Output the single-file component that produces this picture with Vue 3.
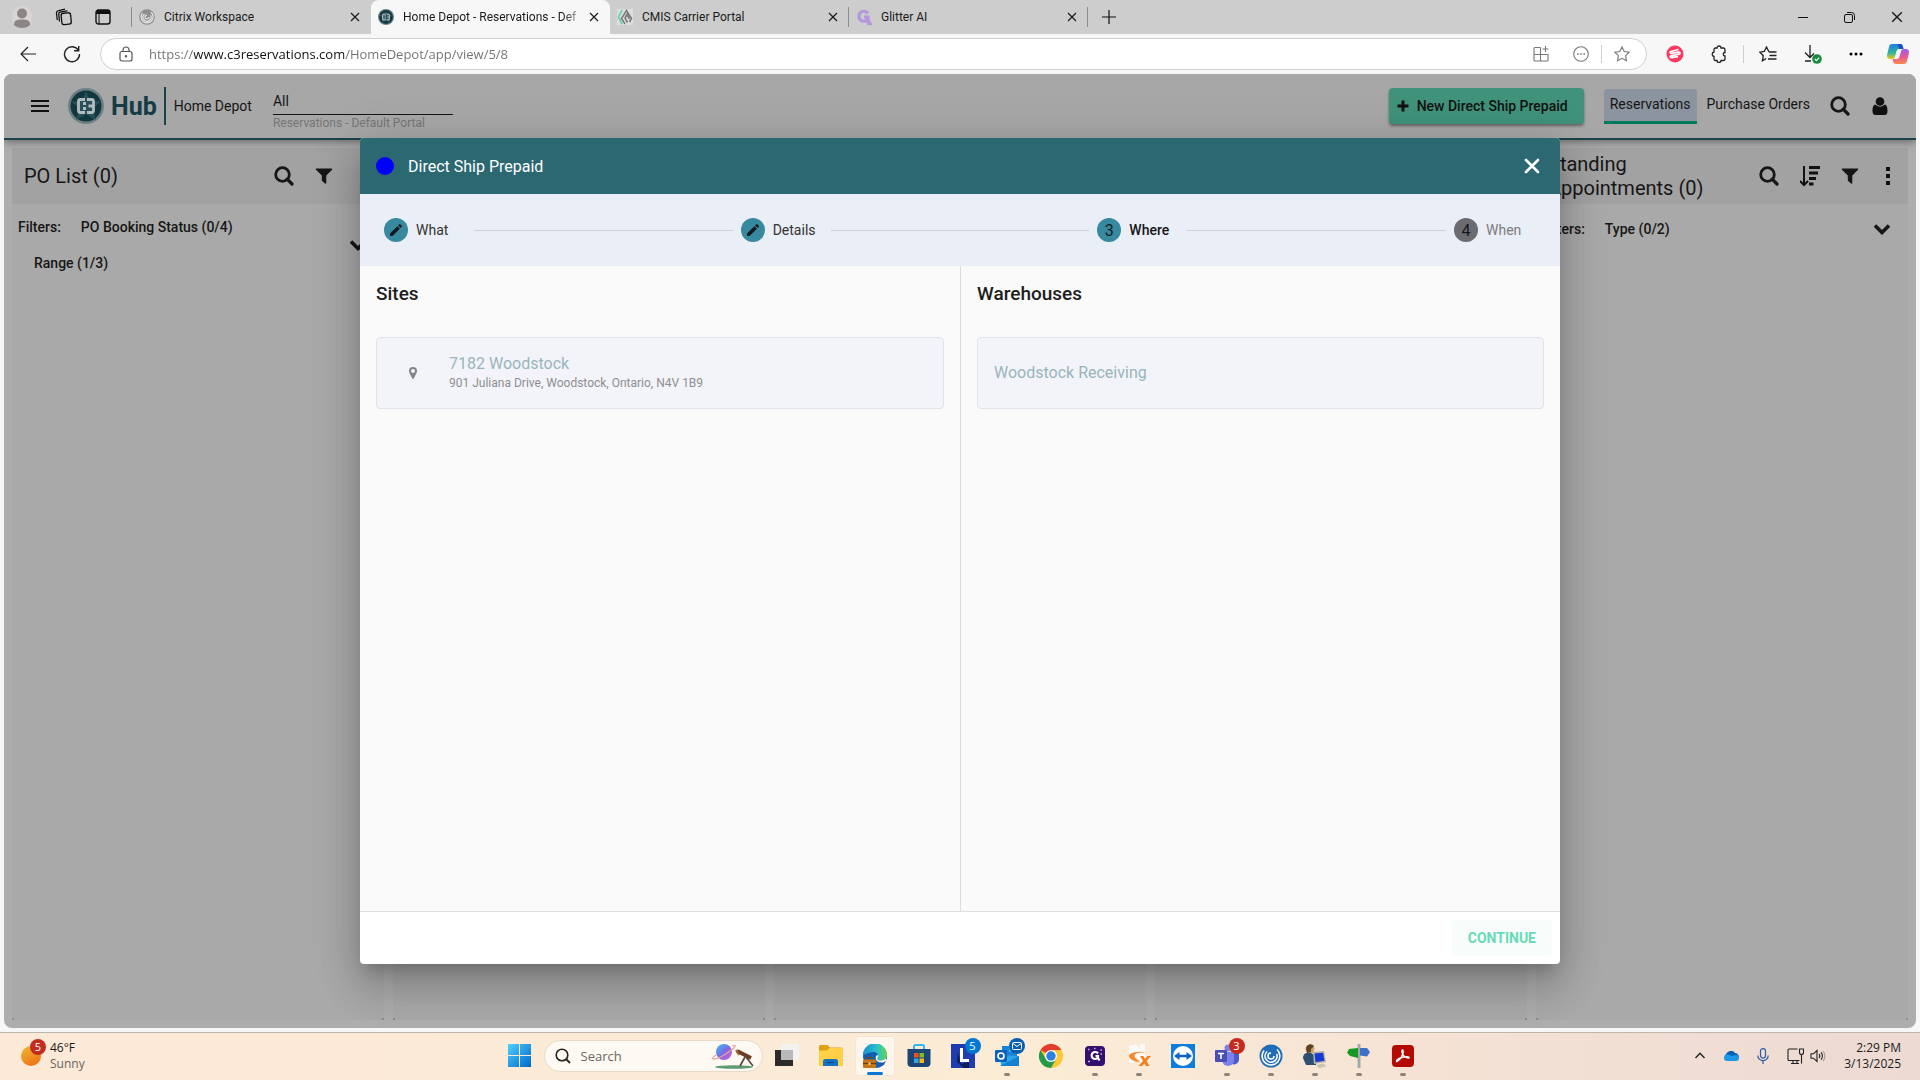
<template>
  <div class="desktop">
    <svg class="sprite" aria-hidden="true">
      <symbol id="i-x" viewBox="0 0 10 10"><path d="M1 1l8 8M9 1l-8 8" fill="none" stroke="currentColor" stroke-width="1.2" /></symbol>
      <symbol id="i-search" viewBox="0 0 20 20"><circle cx="8.500" cy="8.500" r="6.800" fill="none" stroke="currentColor" stroke-width="2.800" /><path d="M13.200 13.200l4.800 4.800" stroke="currentColor" stroke-width="3.200" stroke-linecap="round" /></symbol>
      <symbol id="i-filter" viewBox="0 0 18 18"><path d="M1.500 1.500h15c.7 0 1 .7.5 1.200L11.300 8.500V16c0 .8-.8 1-1.300.6L7.200 14a1 1 0 0 1-.4-.9V8.500L1 2.700c-.5-.5-.2-1.200.5-1.200z" fill="currentColor" /></symbol>
      <symbol id="i-chevron" viewBox="0 0 18 12"><path d="M2 2.500l7 7 7-7" fill="none" stroke="currentColor" stroke-width="3.600" /></symbol>
      <symbol id="i-pencil" viewBox="0 0 24 24"><path d="M3 17.250V21h3.750L17.810 9.940l-3.750-3.750L3 17.250zM20.710 7.040a1 1 0 0 0 0-1.410l-2.340-2.340a1 1 0 0 0-1.410 0l-1.830 1.830 3.750 3.750 1.830-1.830z" fill="currentColor" /></symbol>
      <symbol id="i-c3" viewBox="0 0 36 36">
        <circle cx="18" cy="18" r="18" fill="#6f8085" />
        <circle cx="18" cy="18" r="15.500" fill="#12383f" />
        <path d="M18 3l4 10 11 .5-8.500 7L28 32l-10-6-10 6 3.500-11.500-8.500-7L14 13z" fill="#275058" />
        <path d="M17 11.500h-4.500a2 2 0 0 0-2 2v9a2 2 0 0 0 2 2H17M19 11.500h4.500a2 2 0 0 1 2 2v9a2 2 0 0 1-2 2H19M15 15.500h3M15 20.500h3M20.500 18h5" fill="none" stroke="#b4bcbe" stroke-width="2.800" />
      </symbol>
    </svg>

    <header class="browser">
      <div class="tab-strip">
        <div class="strip-tools">
          <button class="plain" aria-label="Profile">
            <svg width="22" height="24" viewBox="0 0 22 24"><rect x="1" y="1" width="20" height="22" rx="10" fill="#d8d6d4" /><circle cx="11" cy="8.500" r="5" fill="#8b8685" /><path d="M3 20c0-5 3-5.500 8-5.500s8 .5 8 5.500c-4 4-12 4-16 0z" fill="#8b8685" /></svg>
          </button>
          <button class="plain" aria-label="Workspaces">
            <svg width="18" height="18" viewBox="0 0 18 18" fill="none" stroke="#111" stroke-width="1.300"><rect x="6.500" y="5" width="9.500" height="11.500" rx="2.500" transform="rotate(-6 11 11)" /><path d="M4.500 13.500L3.800 6.500a2.500 2.500 0 0 1 2.200-2.700l6.500-.9M2.300 12L1.500 5.500A2.500 2.500 0 0 1 3.600 2.600L10 1.200" /></svg>
          </button>
          <button class="plain" aria-label="Tab actions">
            <svg width="16" height="16" viewBox="0 0 16 16"><rect x="1" y="1" width="14" height="14" rx="2.500" fill="none" stroke="#111" stroke-width="1.400" /><path d="M1 3.500A2.500 2.500 0 0 1 3.500 1h9A2.500 2.500 0 0 1 15 3.500V5H1z" fill="#111" /><path d="M4 5v10" stroke="#111" stroke-width="1" /></svg>
          </button>
        </div>
        <div v-for="tab in tabs" :key="tab.title" class="tab" :class="{ active: tab.active, divided: tab.divided }">
          <svg v-if="tab.icon === 'citrix'" width="16" height="16" viewBox="0 0 16 16" fill="none"><circle cx="8" cy="8" r="7.800" fill="#8d8d8d" /><path d="M3.500 4a6 6 0 1 0 8.500-.7M5.500 5.200a4 4 0 1 0 6 1M8 6.200a1.900 1.900 0 1 0 1.900 1.900" stroke="#e8e8e8" stroke-width="1.200" /></svg>
          <svg v-else-if="tab.icon === 'c3'" width="16" height="16"><use href="#i-c3" /></svg>
          <svg v-else-if="tab.icon === 'cmis'" width="16" height="16" viewBox="0 0 16 16" fill="none"><rect width="16" height="16" fill="#dedede" /><path d="M5 1L1.500 8 5 15" stroke="#6fd0ae" stroke-width="1.800" /><path d="M8 15L4.500 9.500 9.500 1.500 14.500 9.500 12.500 13M10.500 13.500L8 9l2-3.500 2.500 4.500" stroke="#7c7c7c" stroke-width="1.600" /></svg>
          <svg v-else width="16" height="16" viewBox="0 0 16 16" fill="none"><path d="M12 4.500A5 5 0 1 0 12 10V8H8M12 11l2 3.500h-3" stroke="#b497dc" stroke-width="3.200" /></svg>
          <span class="tab-title">{{ tab.title }}</span>
          <button class="plain" aria-label="Close tab"><svg width="10" height="10"><use href="#i-x" /></svg></button>
        </div>
        <button class="plain new-tab" aria-label="New tab"><svg width="14" height="14" viewBox="0 0 14 14"><path d="M7 0v14M0 7h14" stroke="#111" stroke-width="1.200" /></svg></button>
        <div class="window-controls">
          <button class="plain" aria-label="Minimize"><svg width="10" height="10"><path d="M0 5.500h10" stroke="#111" /></svg></button>
          <button class="plain" aria-label="Restore"><svg width="11" height="11" viewBox="0 0 11 11" fill="none" stroke="#111"><rect x=".5" y="2.500" width="8" height="8" rx="1.500" /><path d="M3 .5h4.500a3 3 0 0 1 3 3V8" /></svg></button>
          <button class="plain" aria-label="Close window"><svg width="12" height="12"><use href="#i-x" /></svg></button>
        </div>
      </div>
      <div class="toolbar">
        <button class="plain nav" aria-label="Back"><svg width="16" height="16" viewBox="0 0 16 16" fill="none" stroke="#222" stroke-width="1.200"><path d="M16 8H1M8 1L1 8l7 7" /></svg></button>
        <button class="plain nav" aria-label="Refresh"><svg width="18" height="18" viewBox="0 0 18 18" fill="none" stroke="#222" stroke-width="1.400"><path d="M15.500 5.500A7.500 7.500 0 1 0 16.500 9M15.700 1v4.700H11" /></svg></button>
        <div class="address">
          <svg width="14" height="16" viewBox="0 0 14 16" fill="none" stroke="#555" stroke-width="1.200"><rect x="1" y="5.500" width="12" height="9.500" rx="2" /><path d="M4 5.500V4a3 3 0 0 1 6 0v1.500" /><circle cx="7" cy="10.300" r=".6" fill="#555" /></svg>
          <input class="url" aria-label="Address" value="https://www.c3reservations.com/HomeDepot/app/view/5/8">
          <div class="address-tools">
            <button class="plain" aria-label="Apps"><svg width="16" height="16" viewBox="0 0 16 16" fill="none" stroke="#777" stroke-width="1.100"><path d="M7.500 1.500H2a1 1 0 0 0-1 1V14a1 1 0 0 0 1 1h12a1 1 0 0 0 1-1V8.500H1M7.500 1.500V15M12.500 0v6M9.500 3h6" /></svg></button>
            <button class="plain" aria-label="More"><svg width="16" height="16" viewBox="0 0 16 16"><circle cx="8" cy="8" r="7.300" fill="none" stroke="#777" stroke-width="1.100" /><path d="M4 7.300h1.600v1.500H4zM7.200 7.300h1.600v1.500H7.200zM10.400 7.300H12v1.500h-1.600z" fill="#777" /></svg></button>
            <i class="sep"></i>
            <button class="plain" aria-label="Favorite"><svg width="16" height="16" viewBox="0 0 16 16" fill="none" stroke="#777" stroke-width="1.100"><path d="M8 .9l2.200 4.600 5 .7-3.600 3.500.9 5L8 12.300l-4.500 2.400.9-5L.8 6.200l5-.7z" /></svg></button>
          </div>
        </div>
        <div class="extensions">
          <button class="plain" aria-label="Recorder"><svg width="18" height="18" viewBox="0 0 18 18"><circle cx="9" cy="9" r="8.500" fill="#fb3a62" /><path d="M12.500 4.500l-7.500 2c-1.500.5-1 2 .3 1.900l7.500-1.200c1.700-.1 1.700 1.600.3 2l-8 1.600c-1.500.5-1 2 .4 1.900l6.500-1" stroke="#fff" stroke-width="1.700" fill="none" /></svg></button>
          <button class="plain" aria-label="Extensions"><svg width="16" height="18" viewBox="0 0 16 18" fill="none" stroke="#222" stroke-width="1.300"><path d="M6 3a2 2 0 0 1 4 0h2.500A1.500 1.500 0 0 1 14 4.500V7.500a1.600 1.600 0 0 0 0 3.500v3a1.500 1.500 0 0 1-1.500 1.500H10a2 2 0 0 1-4 0H4.500A1.500 1.500 0 0 1 3 14v-2.500a2.300 2.300 0 0 1 0-4.500V4.500A1.500 1.500 0 0 1 4.500 3z" /></svg></button>
          <i class="sep"></i>
          <button class="plain" aria-label="Favorites"><svg width="18" height="16" viewBox="0 0 18 16" fill="none" stroke="#222" stroke-width="1.300"><path d="M10 6L7.500 1 5.300 5.500.8 6.200l3.500 3.500-.9 5L7 12.600M10 6h7.500M10.500 9.500h7M9 13h8.500" /></svg></button>
          <button class="plain" aria-label="Downloads"><svg width="20" height="20" viewBox="0 0 20 20"><path d="M8 1v12M3 8.500l5 5 4-4M3 17h6" fill="none" stroke="#222" stroke-width="1.300" /><circle cx="15" cy="15" r="4.800" fill="#178a3c" /><path d="M12.800 15l1.600 1.600 2.800-3" fill="none" stroke="#fff" stroke-width="1.200" /></svg></button>
          <button class="plain" aria-label="Settings"><svg width="14" height="4"><circle cx="2" cy="2" r="1.500" /><circle cx="7" cy="2" r="1.500" /><circle cx="12" cy="2" r="1.500" /></svg></button>
          <button class="plain copilot" aria-label="Copilot">
            <svg width="22" height="20" viewBox="0 0 22 20">
              <defs>
                <linearGradient id="cpA" x1="0" y1="0" x2="0" y2="1"><stop offset="0" stop-color="#1a7fe0" /><stop offset=".6" stop-color="#33b59a" /><stop offset="1" stop-color="#f3c614" /></linearGradient>
                <linearGradient id="cpB" x1="0" y1="0" x2="0" y2="1"><stop offset="0" stop-color="#9a5cf0" /><stop offset=".5" stop-color="#e8559a" /><stop offset="1" stop-color="#fb8a4a" /></linearGradient>
              </defs>
              <path d="M5 0h8c2 0 2.500 1 3 3l.5 2H12c-2 0-2.500 2-3 4l-1 3.500C7.500 14 7 15 5 15H3c-3 0-3.500-2.500-2.500-6L2 3c.5-2 1.500-3 3-3z" fill="url(#cpA)" />
              <path d="M17 20H9c-2 0-2.500-1-3-3l-.5-2H10c2 0 2.500-2 3-4l1-3.500C14.500 6 15 5 17 5h2c3 0 3.500 2.500 2.500 6L20 17c-.5 2-1.500 3-3 3z" fill="url(#cpB)" />
              <path d="M13 0c2 0 2.500 1 3 3l.5 2H12.500L10.500 0z" fill="#1c4fc4" />
              <path d="M10 7l3-1.500-2 7.500-2 1.500z" fill="#fff" />
            </svg>
          </button>
        </div>
      </div>
    </header>

    <div class="page-wrap">
      <main class="page">
        <header class="app-bar">
          <button class="plain menu" aria-label="Menu"><svg width="18" height="14" viewBox="0 0 18 14"><path d="M0 2h18M0 7h18M0 12h18" stroke="#111" stroke-width="2" /></svg></button>
          <a class="logo" href="#"><svg width="36" height="36"><use href="#i-c3" /></svg><span>Hub</span></a>
          <span class="company">Home Depot</span>
          <div class="portal">
            <input id="portal" value="All">
            <label for="portal">Reservations - Default Portal</label>
          </div>
          <button class="new-btn"><svg width="12" height="12" viewBox="0 0 12 12"><path d="M6 .5v11M.5 6h11" stroke="currentColor" stroke-width="3" /></svg>New Direct Ship Prepaid</button>
          <nav class="views">
            <a href="#" class="current">Reservations</a>
            <a href="#">Purchase Orders</a>
          </nav>
          <button class="plain bar-icon" aria-label="Search"><svg width="20" height="20"><use href="#i-search" /></svg></button>
          <button class="plain bar-icon" aria-label="Account"><svg width="16" height="18" viewBox="0 0 16 18" fill="#111"><circle cx="8" cy="4.500" r="4.300" /><path d="M3.500 7.500C1 8 .5 11 .5 14c0 2.500 1 4 3 4h9c2 0 3-1.500 3-4 0-3-.5-6-3-6.500-2.500 2.800-6.500 2.800-9 0z" /></svg></button>
        </header>

        <section class="board">
          <article class="panel">
            <header class="panel-head">
              <h2>PO List (0)</h2>
              <div class="panel-tools">
                <button class="plain" aria-label="Search list"><svg width="20" height="20"><use href="#i-search" /></svg></button>
                <button class="plain" aria-label="Filter list"><svg width="18" height="18"><use href="#i-filter" /></svg></button>
                <span class="tool-space"></span>
              </div>
            </header>
            <div class="filters tall">
              <div class="filter-list">
                <span>Filters:</span>
                <button class="plain">PO Booking Status (0/4)</button>
                <button class="plain range">Range (1/3)</button>
              </div>
              <button class="plain" aria-label="Expand filters"><svg width="18" height="12"><use href="#i-chevron" /></svg></button>
            </div>
          </article>
          <article v-for="n in 3" :key="n" class="panel"><header class="panel-head"></header></article>
          <article class="panel">
            <header class="panel-head">
              <h2>Standing Appointments (0)</h2>
              <div class="panel-tools">
                <button class="plain" aria-label="Search appointments"><svg width="20" height="20"><use href="#i-search" /></svg></button>
                <button class="plain" aria-label="Sort"><svg width="20" height="22" viewBox="0 0 20 22"><path d="M4 1v18M0 16l4 4 4-4" fill="none" stroke="#111" stroke-width="2" /><path d="M9 2.500h11M9 8h9M9 13.500h7M9 19h4.500" stroke="#111" stroke-width="3" /></svg></button>
                <button class="plain" aria-label="Filter appointments"><svg width="18" height="18"><use href="#i-filter" /></svg></button>
                <button class="plain more" aria-label="More options"><svg width="4" height="18"><path d="M0 0h4v4H0zM0 7h4v4H0zM0 14h4v4H0z" fill="#111" /></svg></button>
              </div>
            </header>
            <div class="filters">
              <div class="filter-list">
                <span>Filters:</span>
                <button class="plain">Type (0/2)</button>
              </div>
              <button class="plain" aria-label="Expand filters"><svg width="18" height="12"><use href="#i-chevron" /></svg></button>
            </div>
          </article>
        </section>

        <div class="overlay">
          <section class="dialog" role="dialog" aria-labelledby="dialog-title">
            <header class="dialog-head">
              <i class="type-dot"></i>
              <h1 id="dialog-title">Direct Ship Prepaid</h1>
              <button class="plain" aria-label="Close"><svg width="16" height="16" viewBox="0 0 16 16"><path d="M2 2l12 12M14 2L2 14" stroke="#fff" stroke-width="2.600" stroke-linecap="round" /></svg></button>
            </header>
            <div class="stepper">
              <template v-for="(step, i) in steps" :key="step.label">
                <i v-if="i > 0" class="step-line"></i>
                <button class="plain step" :class="step.state">
                  <span class="step-icon">
                    <svg v-if="step.state === 'done'" width="16" height="16"><use href="#i-pencil" /></svg>
                    <template v-else>{{ i + 1 }}</template>
                  </span>
                  <span class="step-label">{{ step.label }}</span>
                </button>
              </template>
            </div>
            <div class="dialog-body">
              <div class="choice-col">
                <h3>Sites</h3>
                <button class="choice">
                  <span class="pin"><svg width="8" height="12" viewBox="0 0 8 12"><path fill-rule="evenodd" d="M4 0a4 4 0 0 0-4 4c0 1 .3 1.500.6 2.200L3.200 11.500c.3.600 1.300.6 1.600 0L7.400 6.200C7.700 5.500 8 5 8 4a4 4 0 0 0-4-4zm0 2a2 2 0 1 1 0 4 2 2 0 0 1 0-4z" fill="#858589" /></svg></span>
                  <span class="choice-text">
                    <span class="name">7182 Woodstock</span>
                    <span class="addr">901 Juliana Drive, Woodstock, Ontario, N4V 1B9</span>
                  </span>
                </button>
              </div>
              <div class="choice-col">
                <h3>Warehouses</h3>
                <button class="choice"><span class="name">Woodstock Receiving</span></button>
              </div>
            </div>
            <footer class="dialog-foot">
              <button class="continue">CONTINUE</button>
            </footer>
          </section>
        </div>
      </main>
    </div>

    <footer class="taskbar">
      <button class="plain weather">
        <span class="sun"><b class="badge red">5</b></span>
        <span class="two-line"><span>46°F</span><span class="dim">Sunny</span></span>
      </button>
      <div class="apps">
        <button class="plain app" aria-label="Start">
          <svg width="23" height="23" viewBox="0 0 23 23">
            <defs><linearGradient id="win" x1="0" y1="0" x2="1" y2="1"><stop offset="0" stop-color="#4fd0ff" /><stop offset="1" stop-color="#0067c8" /></linearGradient></defs>
            <path d="M0 0h11v11H0zM12 0h11v11H12zM0 12h11v11H0zM12 12h11v11H12z" fill="url(#win)" />
          </svg>
        </button>
        <label class="search">
          <svg width="16" height="16" viewBox="0 0 16 16"><circle cx="7" cy="7" r="5.800" fill="none" stroke="#222" stroke-width="1.600" /><path d="M11 11l4 4" stroke="#222" stroke-width="1.800" /></svg>
          <input placeholder="Search" aria-label="Search">
          <svg width="42" height="26" viewBox="0 0 42 26">
            <defs><linearGradient id="planet" x1="0" y1="0" x2="1" y2="1"><stop offset="0" stop-color="#30c4ea" /><stop offset=".5" stop-color="#7d6ae6" /><stop offset="1" stop-color="#e05bd2" /></linearGradient></defs>
            <ellipse cx="22" cy="24" rx="19" ry="1.800" fill="#5f9a72" />
            <circle cx="12" cy="9" r="8" fill="url(#planet)" />
            <path d="M4 12c-7 5-2 6 8 0S27 1 20 3" fill="none" stroke="#e2a3a0" stroke-width="1.200" />
            <path d="M25 8l14 7" stroke="#6b3f22" stroke-width="4" /><path d="M24 7l3 5" stroke="#9c6a3c" stroke-width="2" />
            <path d="M33 14l-5 9M34 14l7 9" stroke="#5c4030" stroke-width="1.600" />
          </svg>
        </label>
        <button v-for="app in apps" :key="app.id" class="plain app" :class="{ running: app.running, focused: app.focused }" :aria-label="app.id">
          <svg v-if="app.id === 'taskview'" width="24" height="24" viewBox="0 0 24 24"><rect y="6" width="18" height="16" fill="#2b2b2b" /><rect x="6" width="18" height="16" rx="1" fill="#f2f2f2" /><path d="M6 6h12v10H6z" fill="#b9b9b9" /></svg>
          <svg v-else-if="app.id === 'explorer'" width="24" height="24" viewBox="0 0 24 24"><path d="M0 2.500A1.500 1.500 0 0 1 1.500 1h7L11 3.500h11.500A1.500 1.500 0 0 1 24 5v16.500H0z" fill="#dfa012" /><path d="M0 6.500h8l2.500-2.500H24v16.500a1.500 1.500 0 0 1-1.500 1.500h-21A1.500 1.500 0 0 1 0 20.500z" fill="#ffd048" /><path d="M4 22v-4.500A2.500 2.500 0 0 1 6.500 15h10a2.500 2.500 0 0 1 2.500 2.500V22z" fill="#1670c4" /><path d="M8 18.500h7" stroke="#0c4b8d" stroke-width="1.300" /></svg>
          <svg v-else-if="app.id === 'edge'" width="24" height="24" viewBox="0 0 24 24">
            <defs>
              <linearGradient id="edgeA" x1="0" y1="0" x2="1" y2="0"><stop offset="0" stop-color="#1690d8" /><stop offset=".6" stop-color="#2cc3c8" /><stop offset="1" stop-color="#66d64e" /></linearGradient>
            </defs>
            <circle cx="12" cy="12" r="12" fill="#0f5fae" />
            <path d="M0 12a12 12 0 0 1 24-1.500c0 4-3 6-6.500 6-3 0-3.500-1.500-3-2.500 2-4-1-6-4-6-4.500 0-10.500 3-10.500 4z" fill="url(#edgeA)" />
            <path d="M14.500 14c-.5 1 0 2.500 3 2.500 2.500 0 4.700-1 5.800-2.700L23 17l-3 1.500c-4 .5-7-1-7.500-4 0-2 1-3.500 2-3.500s.7 1.500 0 3z" fill="#fdf4e8" />
            <path d="M11 9c-4 3-3 12 4 14.500 3-.5 5.500-2 7-4-4 1.500-9.500-1-9.500-6z" fill="#1560b5" />
            <path d="M4 15.500v-2h5v2" fill="none" stroke="#7a4210" stroke-width="1.200" /><rect y="15.500" width="13" height="8.500" rx="1" fill="#c87414" /><path d="M0 19.500h13" stroke="#6b3608" stroke-width="1.200" /><path d="M5.500 18.500h2v2.500h-2z" fill="#ffd470" />
          </svg>
          <svg v-else-if="app.id === 'store'" width="24" height="24" viewBox="0 0 24 24"><path d="M7 7V2.500A1.500 1.500 0 0 1 8.500 1h7A1.500 1.500 0 0 1 17 2.500V7" fill="none" stroke="#35b7ee" stroke-width="2" /><path d="M.5 5h23v14a4 4 0 0 1-4 4h-15a4 4 0 0 1-4-4z" fill="#1b4675" /><path d="M7 9h4.500v4.500H7z" fill="#f05123" /><path d="M12.500 9H17v4.500h-4.500z" fill="#7eba28" /><path d="M7 14.500h4.500V19H7z" fill="#2aa5ea" /><path d="M12.500 14.500H17V19h-4.500z" fill="#fdb813" /></svg>
          <svg v-else-if="app.id === 'lapp'" width="24" height="24" viewBox="0 0 24 24"><path d="M0 0h24v24H0z" fill="#1e3cb0" /><path d="M7 8l3 12 8-2v6H13L6 18z" fill="#101c55" /><path d="M10.500 4v12.500H18" fill="none" stroke="#fff" stroke-width="3" /></svg>
          <svg v-else-if="app.id === 'outlook'" width="24" height="24" viewBox="0 0 24 24"><path d="M7 2h15v12H7z" fill="#1782d6" /><path d="M14 2h8v6h-8z" fill="#35b8f1" /><path d="M5 11l19 1v10H6z" fill="#2aa7ea" /><path d="M5 22l19-10v10z" fill="#1580cf" /><rect y="6" width="12" height="12" rx="1" fill="#0c62b8" /><circle cx="6" cy="12" r="3" fill="none" stroke="#fff" stroke-width="1.700" /></svg>
          <svg v-else-if="app.id === 'chrome'" width="24" height="24" viewBox="0 0 24 24"><circle cx="12" cy="12" r="12" fill="#fcc934" /><path d="M12 12L1.600 6A12 12 0 0 1 22.400 6H12z" fill="#e33b2e" /><path d="M1.600 6A12 12 0 0 0 12 24l5.200-9L12 12 6.800 15z" fill="#249a4d" /><circle cx="12" cy="12" r="6" fill="#fff" /><circle cx="12" cy="12" r="4.700" fill="#2f7de8" /></svg>
          <svg v-else-if="app.id === 'glitter'" width="20" height="20" viewBox="0 0 20 20"><rect width="20" height="20" rx="4" fill="#34106e" /><path d="M13 7.500a3.500 3.500 0 1 0 0 4V10h-2.500M13 12l1.500 2.500" fill="none" stroke="#fff" stroke-width="2.200" /><path d="M3 3.500h1.500M15.500 4H17M3 15.500h2M9 2.500h1.500M15.500 8H17" stroke="#c8a8f4" stroke-width="1.300" /></svg>
          <svg v-else-if="app.id === 'xapp'" width="24" height="24" viewBox="0 0 24 24"><path d="M2 2l7-2 4 5V0h5v18h-5L7 9v10H2z" fill="#fbfaf9" /><path d="M2 11c4-4 13-4 18-2-7-1-12 0-12.500 2.500S11 15.500 13 18C8 18 1 15 2 11z" fill="#f28a2e" /><path d="M13 12h3.500l1.500 3 2.500-3H24l-4.500 5 3 5h-3.500L17.500 19.500 15 22h-3.500l4.500-5z" fill="#f28020" /></svg>
          <svg v-else-if="app.id === 'teamviewer'" width="24" height="24" viewBox="0 0 24 24"><path d="M0 0h24v24H0z" fill="#0e7edb" /><circle cx="12" cy="12" r="10" fill="#fff" /><path d="M3 12l5.500-4v2.700h7V8l5.500 4-5.500 4v-2.700h-7V16z" fill="#0a63c2" /></svg>
          <svg v-else-if="app.id === 'teams'" width="24" height="24" viewBox="0 0 24 24"><circle cx="13" cy="4" r="3.500" fill="#7b83eb" /><path d="M14 8h10v7a5 5 0 0 1-7 5z" fill="#5059c9" /><path d="M7 8h12v8a6 6 0 0 1-12 0z" fill="#7b83eb" /><rect y="6" width="12" height="12" rx="1" fill="#4950b5" /><path d="M3 9.500h6M6 9.500V15" stroke="#fff" stroke-width="1.600" /></svg>
          <svg v-else-if="app.id === 'citrix'" width="24" height="24" viewBox="0 0 24 24"><circle cx="12" cy="12" r="11.500" fill="#1e6db8" /><path d="M5 6.500a8.900 8.900 0 1 0 13-1M8.200 7.500a6 6 0 1 0 9.500 2.500M12 9a3 3 0 1 0 3 3" fill="none" stroke="#fff" stroke-width="1.600" /></svg>
          <svg v-else-if="app.id === 'remote'" width="24" height="24" viewBox="0 0 24 24"><circle cx="7" cy="5" r="4.500" fill="#c9a46d" /><path d="M3 4a4.500 4.500 0 0 1 8-2L8 5v3L4 9z" fill="#5d4322" /><path d="M0 14c0-5 4-6 8-5l5 3v9H3z" fill="#2f4f72" /><path d="M10 8l11-1 2 11-12 2z" fill="#b4b4a8" /><path d="M11.500 9.500l8.500-.8 1.500 8-9 1.500z" fill="#173bd0" /><path d="M13 21l8-1.500 2 3-7 1.500z" fill="#c9c3b0" /></svg>
          <svg v-else-if="app.id === 'sign'" width="24" height="24" viewBox="0 0 24 24"><path d="M10.500 1a1.500 1.500 0 0 1 3 0v23h-3z" fill="#a4a9a8" /><path d="M2 5l9-1v10l-8-2-3-3.500z" fill="#179a24" /><path d="M13 4h7l3 4-3 4.500-7-1z" fill="#3f70c8" /></svg>
          <svg v-else width="22" height="22" viewBox="0 0 22 22"><rect width="22" height="22" rx="4" fill="#b30b00" /><path d="M5 16.500c3-1 7-7.500 6-11-.5-1.500-1.800 0-.8 2.500 1.200 3 3.500 5 6.300 5 1.500-.2.500-1.500-2-1.300-3 .2-7.500 1.500-9.500 3.300-.8.800-.5 1.700 0 1.500z" fill="none" stroke="#fff" stroke-width="1.400" /></svg>
          <b v-if="app.badge" class="badge" :class="app.tone">
            <template v-if="app.badge !== 'mail'">{{ app.badge }}</template>
            <svg v-else width="10" height="8" viewBox="0 0 10 8" fill="none" stroke="#fff"><rect x=".5" y=".5" width="9" height="7" rx="1" /><path d="M1 1.500l4 3 4-3" /></svg>
          </b>
        </button>
      </div>
      <div class="tray">
        <button class="plain" aria-label="Hidden icons"><svg width="10" height="7" viewBox="0 0 10 7"><path d="M.5 6L5 1.200 9.500 6" fill="none" stroke="#222" stroke-width="1.400" /></svg></button>
        <button class="plain" aria-label="OneDrive"><svg width="16" height="11" viewBox="0 0 16 11"><path d="M4 10a4 4 0 0 1-.5-6.500A5 5 0 0 1 12 3c3 0 4 3 4 4z" fill="#0a5fb6" /><path d="M3.500 11a3.300 3.300 0 0 1 1-6.500c2 0 3 1 4 1.500L13 5a3 3 0 0 1 0 6z" fill="#1d97e8" /></svg></button>
        <button class="plain" aria-label="Microphone"><svg width="12" height="16" viewBox="0 0 12 16" fill="none" stroke="#2a5aa8" stroke-width="1.200"><rect x="3.500" y=".6" width="5" height="9.500" rx="2.500" /><path d="M.8 7.500a5.200 5.200 0 0 0 10.400 0M6 13v3" /></svg></button>
        <button class="plain status" aria-label="Network and volume">
          <svg width="17" height="16" viewBox="0 0 17 16" fill="none" stroke="#222" stroke-width="1.100"><path d="M10.500 1H2a1 1 0 0 0-1 1v9.500a1 1 0 0 0 1 1h10.500M4 15.500h8M6 12.500v3M10 12.500v3M14.500 6.500v9M12.500 1h4v3.500a2 2 0 0 1-4 0z" /></svg>
          <svg width="16" height="14" viewBox="0 0 16 14" fill="none" stroke="#222" stroke-width="1.100"><path d="M7 1.500L3.500 4.800H1v4.400h2.500L7 12.500zM9 5a3 3 0 0 1 0 4M11 3.500a5 5 0 0 1 0 7" /><path d="M13 2a7.500 7.500 0 0 1 0 10" stroke="#a39a95" /></svg>
        </button>
        <button class="plain two-line clock"><span>2:29 PM</span><span>3/13/2025</span></button>
      </div>
    </footer>
  </div>
</template>

<script setup>
import { ref } from 'vue'

const tabs = ref([
  { title: 'Citrix Workspace', icon: 'citrix' },
  { title: 'Home Depot - Reservations - Def', icon: 'c3', active: true },
  { title: 'CMIS Carrier Portal', icon: 'cmis', divided: true },
  { title: 'Glitter AI', icon: 'glitter', divided: true },
])

const steps = ref([
  { label: 'What', state: 'done' },
  { label: 'Details', state: 'done' },
  { label: 'Where', state: 'current' },
  { label: 'When', state: 'pending' },
])

const apps = [
  { id: 'taskview' },
  { id: 'explorer' },
  { id: 'edge', focused: true },
  { id: 'store' },
  { id: 'lapp', badge: '5', tone: 'blue' },
  { id: 'outlook', badge: 'mail', tone: 'navy', running: true },
  { id: 'chrome' },
  { id: 'glitter', running: true },
  { id: 'xapp', running: true },
  { id: 'teamviewer' },
  { id: 'teams', badge: '3', tone: 'red', running: true },
  { id: 'citrix', running: true },
  { id: 'remote', running: true },
  { id: 'sign', running: true },
  { id: 'acrobat', running: true },
]
</script>

<style>
body { margin: 0; }
</style>

<style scoped>
* { box-sizing: border-box; }
.desktop { display: flex; flex-direction: column; height: 100vh; overflow: hidden; font-family: Roboto, sans-serif; font-size: 14px; color: #161616; background: #f7f7f7; }
.sprite { position: absolute; width: 0; height: 0; }
svg { display: block; flex: none; }
h1, h2, h3 { margin: 0; font-weight: 400; }
input { min-width: 0; border: 0; outline: 0; padding: 0; background: none; font: inherit; color: inherit; }
.plain { display: flex; align-items: center; justify-content: center; padding: 0; border: 0; background: none; font: inherit; color: inherit; }

.browser, .taskbar { font-family: "Open Sans", "Noto Sans", sans-serif; font-size: 12px; color: #1b1b1b; }
.tab-strip { display: flex; align-items: center; height: 34px; background: #cdcdcd; }
.strip-tools { display: flex; align-items: center; justify-content: space-between; width: 132px; height: 20px; padding: 0 20px 0 11px; border-right: 1px solid #8d8d8d; }
.tab { position: relative; display: flex; align-items: center; gap: 9px; width: 239px; height: 34px; padding: 0 11px 0 7px; }
.tab.active { background: #f7f7f7; border-radius: 8px 8px 0 0; }
.tab.divided::after { content: ""; position: absolute; right: 0; top: 7px; height: 20px; border-right: 1px solid #8d8d8d; }
.tab-title { flex: 1; overflow: hidden; font-family: Roboto, sans-serif; white-space: nowrap; }
.tab.active .tab-title { mask-image: linear-gradient(90deg, #000 160px, transparent 184px); }
.new-tab { margin-left: 14px; }
.window-controls { display: flex; gap: 36px; margin-left: auto; padding-right: 17px; }
.toolbar { display: flex; align-items: center; height: 40px; padding-right: 2px; background: #f7f7f7; }
.nav { width: 44px; }
.nav:first-child { margin-left: 6px; }
.address { display: flex; flex: 1; align-items: center; gap: 16px; height: 32px; margin-left: 6px; padding: 0 16px 0 18px; border: 1px solid #cfcfcf; border-radius: 16px; background: #fff; }
.url { flex: 1; font-size: 13px; line-height: 20px; color: transparent; background: linear-gradient(90deg, #707070 45px, #111 45px, #111 195px, #707070 195px); background-clip: text; }
.address-tools { display: flex; align-items: center; gap: 12px; }
.address-tools .plain:first-child { margin-right: 12px; }
.sep { width: 1px; height: 18px; background: #cfcfcf; }
.extensions { display: flex; align-items: center; margin-left: 6px; }
.extensions .plain { width: 44px; }
.extensions .copilot { width: 40px; }
.extensions .sep { margin: 0 2px; }

.page-wrap { flex: 1; min-height: 0; display: flex; padding: 0 4px 4px; }
.page { position: relative; flex: 1; display: flex; flex-direction: column; min-width: 0; overflow: hidden; border-radius: 8px; background: #adadad; }
.app-bar { position: relative; display: flex; align-items: center; height: 66px; flex: none; padding: 0 28px 0 27px; background: #a7a7a7; border-bottom: 2px solid #1b434b; box-shadow: 0 2px 8px rgba(0, 0, 0, .4); }
.logo { display: flex; align-items: center; gap: 7px; height: 38px; margin-left: 19px; padding-right: 7px; border-right: 2px solid #1b434b; color: #143c45; font-size: 25px; font-weight: 700; text-decoration: none; }
.company { margin-left: 8px; }
.portal { display: flex; flex-direction: column; width: 180px; margin-left: 21px; padding-top: 10px; }
.portal input { width: 100%; height: 24px; padding-bottom: 4px; border-bottom: 1px solid #161616; }
.portal label { font-size: 12px; line-height: 16px; color: #767676; }
.new-btn { display: flex; align-items: center; gap: 8px; height: 36px; margin-left: auto; padding: 0 16px 0 8px; border: 0; border-radius: 4px; background: #40927a; color: #111; font: 500 14px Roboto, sans-serif; box-shadow: 0 2px 3px rgba(0, 0, 0, .4); }
.views { display: flex; margin: 0 14px 0 20px; gap: 4px; }
.views a { height: 35px; padding: 0 6px; line-height: 30px; color: #161616; text-decoration: none; }
.views .current { border-bottom: 3px solid #007a5a; border-radius: 3px 3px 0 0; background: #8c949f; }
.bar-icon + .bar-icon { margin-left: 22px; }

.board { flex: 1; display: grid; grid-template-columns: repeat(5, 1fr); gap: 9px; padding: 8px; }
.panel { background: linear-gradient(#8c8c8c, #8c8c8c) left bottom / 2px 2px no-repeat, linear-gradient(#8c8c8c, #8c8c8c) right bottom / 2px 2px no-repeat, #a9a9a9; }
.panel-head { display: flex; align-items: center; justify-content: space-between; height: 56px; padding: 0 12px; background: #a2a2a2; }
.panel-head h2 { flex: 1; padding-right: 32px; font-size: 20px; line-height: 24px; }
.panel-tools { display: flex; align-items: center; gap: 21px; }
.tool-space { width: 18px; }
.panel-tools .more { width: 16px; }
.filters { display: flex; align-items: center; padding: 7px 17px 0 6px; font-weight: 500; }
.filters.tall { padding-top: 5px; }
.filter-list { display: flex; flex: 1; flex-wrap: wrap; align-items: center; column-gap: 20px; padding-right: 24px; line-height: 36px; }
.filter-list .range { margin-left: 16px; }

.overlay { position: absolute; inset: 0; display: flex; justify-content: center; padding: 64px; }
.dialog { display: flex; flex-direction: column; width: 100%; max-width: 1200px; overflow: hidden; border-radius: 4px; background: #fff; box-shadow: 0 11px 15px -7px rgba(0, 0, 0, .2), 0 24px 38px 3px rgba(0, 0, 0, .14), 0 9px 46px 8px rgba(0, 0, 0, .12); }
.dialog-head { display: flex; align-items: center; height: 56px; padding: 0 20px 0 16px; background: #2c6872; color: #fff; }
.dialog-head h1 { flex: 1; margin-left: 14px; font-size: 16px; }
.type-dot { width: 18px; height: 18px; border-radius: 50%; background: #00f; }
.stepper { display: flex; align-items: center; height: 72px; padding: 0 24px; background: #eaeef6; }
.step { gap: 8px; }
.step-icon { display: flex; align-items: center; justify-content: center; width: 24px; height: 24px; border-radius: 50%; background: #37899f; color: #10191c; font-size: 16px; }
.step-label { min-width: 50px; text-align: left; color: #333; }
.step.current .step-label { font-weight: 500; color: #161616; }
.step.pending .step-icon { background: #6b6c70; }
.step.pending .step-label { color: #7b7c80; }
.step-line { flex: 1; height: 1px; margin: 0 8px; background: #c9ced8; }
.dialog-body { flex: 1; display: grid; grid-template-columns: 1fr 1fr; background: #fafafa; }
.choice-col { padding: 16px; }
.choice-col + .choice-col { border-left: 1px solid #dcdcdc; }
.choice-col h3 { margin-bottom: 32px; font-size: 19px; font-weight: 500; line-height: 23px; color: #1d1d1d; }
.choice { display: flex; align-items: center; width: 100%; height: 72px; padding: 0 16px; border: 1px solid #e2e3ea; border-radius: 4px; background: #f3f4f9; font: 400 16px Roboto, sans-serif; text-align: left; }
.pin { display: flex; justify-content: center; width: 40px; margin-right: 16px; }
.choice-text { display: flex; flex-direction: column; }
.name { line-height: 20px; color: #9ab4bb; }
.addr { font-size: 12px; line-height: 18px; color: #8e8e91; }
.dialog-foot { display: flex; justify-content: flex-end; padding: 8px; border-top: 1px solid #dfdfdf; }
.continue { height: 36px; padding: 0 16px; border: 0; border-radius: 4px; background: #f8fdfb; color: #66dab7; font: 700 14px Roboto, sans-serif; }

.taskbar { display: grid; grid-template-columns: 1fr auto 1fr; align-items: center; height: 48px; padding: 0 19px 2px 21px; border-top: 1px solid #bfb6ab; background: linear-gradient(90deg, #fce9d7, #fbecd6 55%, #f5e2d5 75%, #ecdad3); }
.weather { justify-self: start; gap: 9px; text-align: left; }
.sun { position: relative; width: 20px; height: 20px; border-radius: 50%; background: linear-gradient(150deg, #e9bd35, #f3660f); }
.two-line { display: flex; flex-direction: column; align-items: flex-start; line-height: 16px; }
.dim { color: #6c645c; }
.apps { display: flex; align-items: center; gap: 4px; }
.app { position: relative; width: 40px; height: 40px; }
.app.focused { border: 1px solid #f3e6d6; border-radius: 4px; background: #fef6ec; }
.app.running::after, .app.focused::after { content: ""; position: absolute; left: 17px; bottom: 0; width: 6px; height: 3px; border-radius: 2px; background: #8d857c; }
.app.focused::after { left: 11px; width: 16px; background: #0a78d4; }
.badge { position: absolute; top: 2px; right: 2px; display: flex; align-items: center; justify-content: center; width: 16px; height: 16px; border-radius: 50%; color: #fff; font-size: 11px; font-weight: 400; }
.sun .badge { top: -7px; right: -5px; }
.red { background: #c42b1c; }
.blue { background: #0078d4; }
.navy { background: #085fb2; }
.search { display: flex; align-items: center; width: 219px; height: 32px; padding: 0 8px 0 10px; border: 1px solid #ead9c4; border-radius: 16px; background: #fefaf3; }
.search input { flex: 1; margin-left: 10px; font-size: 13px; }
.search input::placeholder { color: #6a6661; opacity: 1; }
.tray { justify-self: end; display: flex; align-items: center; gap: 18px; }
.status { gap: 6px; }
.clock { align-items: flex-end; }
</style>
